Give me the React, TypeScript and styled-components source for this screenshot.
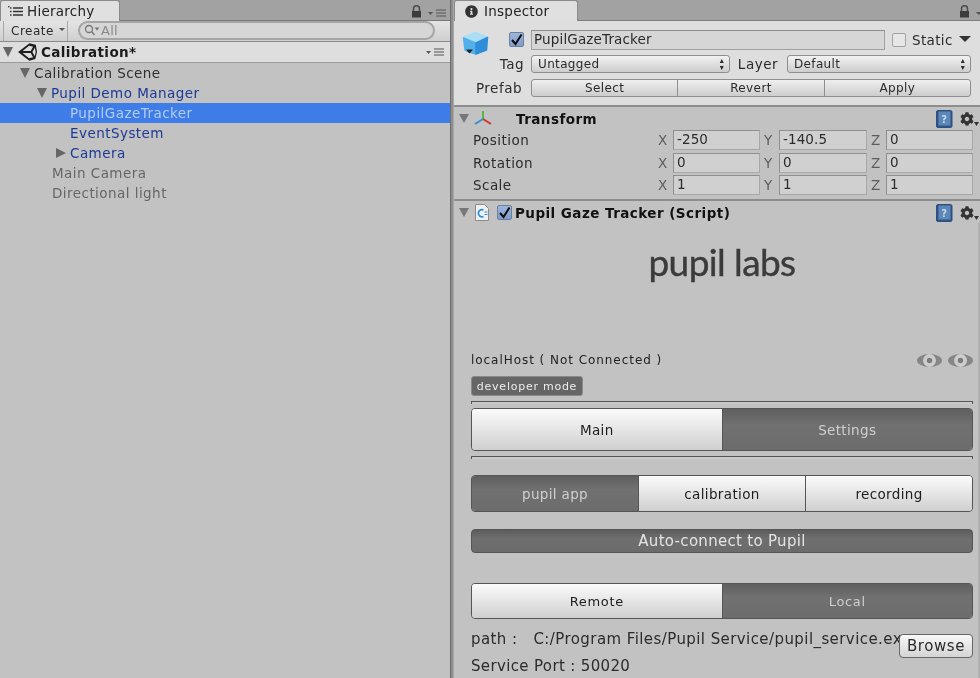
import React from "react";
import styled, { createGlobalStyle } from "styled-components";
import { FaCog, FaInfoCircle } from "react-icons/fa";

const Global = createGlobalStyle`
  html, body { margin: 0; padding: 0; background: #c2c2c2; overflow: hidden; }
  * { box-sizing: border-box; }
`;

const Editor = styled.div`
  width: 980px;
  height: 678px;
  display: flex;
  overflow: hidden;
  font-family: "DejaVu Sans", sans-serif;
  font-size: 13.5px;
  letter-spacing: 0.45px;
  color: #2b2b2b;
  background: #c2c2c2;
  filter: blur(0.45px);
`;

/* shared window chrome */
const Panel = styled.div<{ $w: number }>`
  width: ${(p) => p.$w}px;
  flex: none;
  display: flex;
  flex-direction: column;
`;
const Sash = styled.div`
  width: 4px;
  flex: none;
  background: #8e8e8e;
  border-left: 1px solid #6f6f6f;
  border-right: 1px solid #a8a8a8;
`;
const TabStrip = styled.div`
  height: 21px;
  flex: none;
  display: flex;
  justify-content: space-between;
  background: #a2a2a2;
  border-bottom: 1px solid #7b7b7b;
`;
const Tab = styled.div<{ $w: number; $pad: number; $gap: number }>`
  width: ${(p) => p.$w}px;
  height: 21px;
  flex: none;
  display: flex;
  align-items: center;
  gap: ${(p) => p.$gap}px;
  padding-left: ${(p) => p.$pad}px;
  font-size: 13.5px;
  letter-spacing: 0.25px;
  color: #222;
  background: #e0e0e0;
  border: 1px solid #8a8a8a;
  border-bottom: none;
  border-radius: 3px 3px 0 0;
`;
const TabTools = styled.div<{ $cut?: boolean }>`
  flex: none;
  display: flex;
  align-items: flex-end;
  gap: 6px;
  padding: 0 4px 2px 0;
  margin-right: ${(p) => (p.$cut ? -18 : 0)}px;
`;

/* hierarchy */
const Toolbar = styled.div`
  height: 21px;
  flex: none;
  display: flex;
  align-items: center;
  background: linear-gradient(#e4e4e4, #cfcfcf);
  border-bottom: 1px solid #8a8a8a;
`;
const CreateButton = styled.div`
  width: 65px;
  height: 20px;
  margin-left: 3px;
  display: flex;
  align-items: center;
  gap: 5px;
  padding-left: 7px;
  font-size: 12px;
  letter-spacing: 0.5px;
  border-left: 1px solid #a8a8a8;
  border-right: 1px solid #a8a8a8;
`;
const SmallArrow = styled.span`
  width: 0;
  height: 0;
  margin-bottom: 3px;
  border-left: 3px solid transparent;
  border-right: 3px solid transparent;
  border-top: 3px solid #555;
`;
const SearchField = styled.div`
  width: 357px;
  height: 19px;
  margin: -2px 0 0 10px;
  display: flex;
  align-items: center;
  padding-left: 4px;
  font-size: 13px;
  letter-spacing: 0.3px;
  color: #8a8a8a;
  background: #d6d6d6;
  border: 2px solid #a5a5a5;
  border-radius: 10px;
`;
const SceneHeader = styled.div`
  height: 21px;
  flex: none;
  display: flex;
  align-items: center;
  padding: 0 6px 0 3px;
  background: #dedede;
  border-bottom: 1px solid #9a9a9a;
  font-weight: bold;
  font-size: 13.5px;
  color: #1b1b1b;
  letter-spacing: 0.4px;
`;
const SceneTitle = styled.span`
  margin-left: 4px;
  flex: 1;
`;
const Row = styled.div<{ $depth: number; $kind?: "prefab" | "off" | "plain"; $selected?: boolean }>`
  height: 20px;
  flex: none;
  display: flex;
  align-items: center;
  padding-left: ${(p) => p.$depth}px;
  background: ${(p) => (p.$selected ? "#3e7ce8" : "transparent")};
  color: ${(p) =>
    p.$selected ? "#b4cdf6" : p.$kind === "prefab" ? "#1c3a96" : p.$kind === "off" ? "#666" : "#2f2f2f"};
`;
const Fold = styled.span<{ $open: boolean }>`
  width: 0;
  height: 0;
  flex: none;
  margin-right: 4px;
  ${(p) =>
    p.$open
      ? `border-left: 5.5px solid transparent; border-right: 5.5px solid transparent; border-top: 10px solid #666;`
      : `margin-left: 1px; border-top: 5.5px solid transparent; border-bottom: 5.5px solid transparent; border-left: 10px solid #666;`}
`;

/* inspector */
const ObjectHeader = styled.div`
  height: 86px;
  flex: none;
  display: grid;
  grid-template-rows: 26px 24px 24px;
  background: #dedede;
  border-bottom: 2px solid #8d8d8d;
  padding: 5px 8px 0 6px;
`;
const HeaderRow = styled.div`
  display: flex;
  align-items: center;
`;
const NameRow = styled(HeaderRow)`
  padding-top: 1px;
`;
const CubeSlot = styled.div`
  width: 49px;
  height: 26px;
  flex: none;
  align-self: flex-start;
  margin: 4px 0 -4px 2px;
`;
const Check = styled.span<{ $gap?: number }>`
  width: 15px;
  height: 15px;
  margin-left: ${(p) => p.$gap ?? -2}px;
  flex: none;
  display: inline-flex;
  align-items: center;
  justify-content: center;
  background: linear-gradient(#9cb6dc, #7f9dcc);
  border: 1px solid #6e7f9c;
  border-radius: 2px;
`;
const NameField = styled.div`
  width: 354px;
  height: 20px;
  margin-left: 7px;
  padding-left: 2px;
  line-height: 17px;
  font-size: 13.5px;
  letter-spacing: 0.15px;
  background: #d6d6d6;
  border: 1px solid #a0a0a0;
  border-top-color: #8a8a8a;
`;
const StaticBox = styled.span`
  width: 14px;
  height: 14px;
  margin-left: 7px;
  background: #e6e6e6;
  border: 1px solid #a2a2a2;
  border-radius: 2px;
`;
const StaticLabel = styled.span`
  margin-left: 6px;
  font-size: 13.5px;
  letter-spacing: 0.35px;
`;
const BigArrow = styled.span`
  width: 0;
  height: 0;
  margin-left: 6px;
  margin-bottom: 2px;
  border-left: 6px solid transparent;
  border-right: 6px solid transparent;
  border-top: 6px solid #333;
`;
const FieldLabel = styled.span<{ $w: number; $gap: number }>`
  width: ${(p) => p.$w}px;
  flex: none;
  text-align: right;
  font-size: 13.5px;
  letter-spacing: 0.5px;
  padding-right: ${(p) => p.$gap}px;
`;
const Popup = styled.div<{ $w: number }>`
  width: ${(p) => p.$w}px;
  height: 18px;
  flex: none;
  display: flex;
  align-items: center;
  justify-content: space-between;
  padding: 0 4px 0 6px;
  font-size: 12px;
  letter-spacing: 0.35px;
  background: linear-gradient(#f2f2f2, #cdcdcd);
  border: 1px solid #8f8f8f;
  border-radius: 3px;
`;
const Updown = styled.span`
  font-size: 8px;
  line-height: 7px;
  width: 6px;
  text-align: center;
  white-space: pre-line;
`;
const PrefabGroup = styled.div`
  display: flex;
  width: 440px;
  height: 18px;
  background: linear-gradient(#efefef, #cdcdcd);
  border: 1px solid #8f8f8f;
  border-radius: 3px;
`;
const PrefabButton = styled.div`
  flex: 1;
  display: flex;
  align-items: center;
  justify-content: center;
  font-size: 12px;
  letter-spacing: 0.4px;
  & + & { border-left: 1px solid #8f8f8f; }
`;
const ComponentBar = styled.div`
  height: 22px;
  flex: none;
  display: flex;
  align-items: center;
  padding: 1px 1px 0 5px;
  font-weight: bold;
  font-size: 13.5px;
  letter-spacing: 0.45px;
  color: #111;
`;
const FoldSmall = styled.span`
  width: 0;
  height: 0;
  flex: none;
  border-left: 5px solid transparent;
  border-right: 5px solid transparent;
  border-top: 9px solid #777;
  margin-right: 5px;
`;
const ComponentName = styled.span<{ $indent: number }>`
  margin-left: ${(p) => p.$indent}px;
  flex: 1;
`;
const TransformBody = styled.div`
  height: 72px;
  flex: none;
  display: grid;
  grid-auto-rows: 22.4px;
  padding-left: 19px;
  border-bottom: 2px solid #8d8d8d;
`;
const VectorRow = styled.div`
  display: flex;
  align-items: center;
`;
const VectorName = styled.span`
  width: 185px;
  flex: none;
`;
const Axis = styled.span`
  width: 15px;
  flex: none;
  text-align: left;
  letter-spacing: 0;
  color: #5d5d5d;
`;
const NumberField = styled.div<{ $w: number }>`
  width: ${(p) => p.$w}px;
  height: 20px;
  flex: none;
  margin-right: 4px;
  padding-left: 3px;
  line-height: 17px;
  letter-spacing: 0.1px;
  background: #d0d0d0;
  border: 1px solid #8f8f8f;
  border-bottom-color: #a8a8a8;
  border-right-color: #a8a8a8;
`;
const ScriptBody = styled.div`
  flex: 1;
  min-height: 0;
  display: flex;
  flex-direction: column;
  padding: 0 5px 0 17px;
  border-right: 2px solid #b2b2b2;
`;
const Logo = styled.div`
  height: 125px;
  flex: none;
  text-align: center;
  padding-top: 14px;
  font-family: Lato, "Open Sans", sans-serif;
  font-size: 37px;
  line-height: 50px;
  letter-spacing: -0.6px;
  color: #3b3b3b;
  -webkit-text-stroke: 0.4px #3b3b3b;
`;
const StatusRow = styled.div`
  height: 28px;
  flex: none;
  display: flex;
  align-items: center;
  justify-content: space-between;
  padding-bottom: 4px;
  font-size: 12px;
  letter-spacing: 0.95px;
  color: #222;
`;
const Eyes = styled.div`
  display: flex;
  gap: 6px;
`;
const DevBadge = styled.div`
  width: 112px;
  height: 20px;
  flex: none;
  display: flex;
  align-items: center;
  justify-content: center;
  font-size: 11px;
  letter-spacing: 0.75px;
  color: #ececec;
  background: #666;
  border: 1px solid #8a8a8a;
  border-radius: 3px;
`;
const Rule = styled.div<{ $top: number }>`
  height: 3px;
  flex: none;
  margin-top: ${(p) => p.$top}px;
  background: #c9c9c9;
  border-top: 1px solid #555;
  border-left: 1px solid #555;
  border-right: 1px solid #555;
`;
const Segments = styled.div<{ $h: number; $top: number }>`
  height: ${(p) => p.$h}px;
  flex: none;
  margin-top: ${(p) => p.$top}px;
  display: flex;
  border: 1px solid #555;
  border-radius: 4px;
  overflow: hidden;
`;
const Segment = styled.div<{ $on?: boolean; $small?: boolean }>`
  flex: 1;
  display: flex;
  align-items: center;
  justify-content: center;
  font-size: ${(p) => (p.$small ? 13 : 13.5)}px;
  letter-spacing: ${(p) => (p.$small ? 0.65 : 0.35)}px;
  color: ${(p) => (p.$on ? "#cfcfcf" : "#1d1d1d")};
  background: ${(p) =>
    p.$on ? "linear-gradient(#5f5f5f, #717171 40%, #6c6c6c)" : "linear-gradient(#fbfbfb, #cfcfcf)"};
  & + & { border-left: 1px solid #555; }
`;
const ConnectBar = styled.div`
  height: 24px;
  flex: none;
  margin-top: 17px;
  display: flex;
  align-items: center;
  justify-content: center;
  font-size: 15px;
  letter-spacing: 0.3px;
  color: #e4e4e4;
  background: linear-gradient(#5c5c5c, #6f6f6f 40%, #6b6b6b);
  border: 1px solid #555;
  border-radius: 4px;
`;
const PathRow = styled.div`
  height: 29px;
  flex: none;
  margin-top: 10px;
  display: flex;
  align-items: flex-start;
`;
const PathText = styled.div`
  flex: 1;
  min-width: 0;
  white-space: nowrap;
  font-size: 15px;
  line-height: 20px;
  letter-spacing: 0.42px;
`;
const PathValue = styled.span`
  margin-left: 16px;
`;
const Browse = styled.div`
  position: relative;
  z-index: 1;
  width: 74px;
  height: 24px;
  flex: none;
  margin-top: 5px;
  display: flex;
  align-items: center;
  justify-content: center;
  font-size: 15px;
  letter-spacing: 0.55px;
  background: linear-gradient(#f8f8f8, #d4d4d4);
  border: 1px solid #666;
  border-radius: 4px;
`;
const PortRow = styled.div`
  margin-top: -2px;
  font-size: 15px;
  line-height: 20px;
  letter-spacing: 0.35px;
`;
const GearWrap = styled.span`
  display: inline-flex;
  align-items: flex-end;
  margin-left: 7px;
`;

const LockIcon = () => (
  <svg width="11" height="13" viewBox="0 0 11 13">
    <path d="M2.500 6V3.800a3 3 0 0 1 6 0V6" fill="none" stroke="#4a4a4a" strokeWidth="1.500" />
    <rect x="1" y="6" width="9" height="6.500" fill="#3c3c3c" />
  </svg>
);
const MenuIcon = ({ color = "#555" }: { color?: string }) => (
  <svg width="18" height="9" viewBox="0 0 18 9">
    <path d="M0 3h5L2.500 6z" fill={color} />
    <path d="M8 1h10M8 4h10M8 7h10" stroke={color} strokeWidth="1.200" />
  </svg>
);
const ListIcon = () => (
  <svg width="15" height="11" viewBox="0 0 15 11">
    <path d="M5 2h10M5 5.500h10M5 9h10" stroke="#333" strokeWidth="1.300" />
    <path d="M0 .5h1.500M2 2h1.500M2 5.500h1.500M2 9h1.500" stroke="#333" strokeWidth="1.500" />
  </svg>
);
const SearchIcon = () => (
  <svg width="17" height="12" viewBox="0 0 17 12">
    <circle cx="5" cy="5" r="3.500" fill="none" stroke="#777" strokeWidth="1.300" />
    <path d="M7.500 7.500l3 3.500" stroke="#777" strokeWidth="1.500" />
    <path d="M10.500 3.500h5l-2.500 3z" fill="#777" />
  </svg>
);
const UnityIcon = () => (
  <svg width="20" height="20" viewBox="0 0 20 20">
    <path
      d="M12.500 1.200l6.300 1.600 1.200 7.200-1.700 7-6 1.800L1 10zM12 3.800L5.600 9h8.100l2.400-4.300zM5.600 11l6.400 5.300 4.100-1L13.700 11zM15.400 10l2.400 4.200.9-4.200-.9-4.200z"
      fill="#1e1e1e"
      fillRule="evenodd"
    />
  </svg>
);
const CubeIcon = () => (
  <svg width="27" height="25" viewBox="0 0 27 25">
    <g strokeLinejoin="round" strokeWidth="1.500">
      <path d="M1.500 6.500L13 1.500l12.500 4.500-12 5.500z" fill="#a9def5" stroke="#a9def5" />
      <path d="M1.500 7l12 5v11L7 21l-4-2z" fill="#55b0ea" stroke="#55b0ea" />
      <path d="M25.500 6.500l-11.500 5.500v11l10.500-4z" fill="#2f8ed8" stroke="#2f8ed8" />
    </g>
    <path d="M4 18.500h7l-3.500 4z" fill="#222" />
  </svg>
);
const Tick = () => (
  <svg width="13" height="13" viewBox="0 0 13 13">
    <path d="M2 7l3.500 4L11.500 1.500" fill="none" stroke="#0c0c0c" strokeWidth="2" />
  </svg>
);
const AxesIcon = () => (
  <svg width="18" height="18" viewBox="0 0 18 18">
    <path d="M9 9V1" stroke="#54b848" strokeWidth="2" />
    <path d="M9 9l8 5" stroke="#d8342c" strokeWidth="2" />
    <path d="M9 9l-8 5" stroke="#2f8fd6" strokeWidth="2" />
  </svg>
);
const ScriptIcon = () => (
  <svg width="16" height="17" viewBox="0 0 16 17">
    <path d="M1.500.5h9l4 4v12h-13z" fill="#eef1f3" stroke="#8c8c8c" />
    <path d="M9.500 6a3.600 3.600 0 1 0 0 6.500" fill="none" stroke="#2c8fd6" strokeWidth="1.700" />
    <path d="M10.500 8h3M10.500 10.500h3" stroke="#2c8fd6" />
  </svg>
);
const HelpIcon = () => (
  <svg width="17" height="18" viewBox="0 0 17 18">
    <rect x="0.500" y="0.500" width="15.500" height="17" rx="1.500" fill="#2f5486" stroke="#2c4f80" />
    <rect x="2.500" y="1.500" width="12" height="14" fill="#5c87b8" />
    <text x="8.500" y="13" fontSize="10" fontFamily="DejaVu Sans" fontWeight="bold" fill="#c6d8ec" textAnchor="middle">?</text>
  </svg>
);
const Gear = () => (
  <GearWrap>
    <FaCog size={14} color="#333" />
    <svg width="5" height="4" viewBox="0 0 5 4"><path d="M0 0h5L2.500 4z" fill="#333" /></svg>
  </GearWrap>
);
const EyeIcon = () => (
  <svg width="25" height="15" viewBox="0 0 25 15">
    <ellipse cx="12.500" cy="7.500" rx="12.500" ry="6.500" fill="#868686" />
    <circle cx="12.500" cy="7.500" r="6.500" fill="#cdcdcd" />
    <circle cx="12.500" cy="7.500" r="2.700" fill="#7b7b7b" />
  </svg>
);

const vectors = [
  { name: "Position", x: "-250", y: "-140.5", z: "0" },
  { name: "Rotation", x: "0", y: "0", z: "0" },
  { name: "Scale", x: "1", y: "1", z: "1" },
];

const App = () => {
  return (
    <Editor>
      <Global />
      <Panel $w={450}>
        <TabStrip>
          <Tab $w={120} $pad={7} $gap={4}>
            <ListIcon />
            Hierarchy
          </Tab>
          <TabTools>
            <LockIcon />
            <MenuIcon />
          </TabTools>
        </TabStrip>
        <Toolbar>
          <CreateButton>
            Create
            <SmallArrow />
          </CreateButton>
          <SearchField>
            <SearchIcon />
            All
          </SearchField>
        </Toolbar>
        <SceneHeader>
          <Fold $open />
          <UnityIcon />
          <SceneTitle>Calibration*</SceneTitle>
          <MenuIcon />
        </SceneHeader>
        <Row $depth={20}>
          <Fold $open />
          Calibration Scene
        </Row>
        <Row $depth={37} $kind="prefab">
          <Fold $open />
          Pupil Demo Manager
        </Row>
        <Row $depth={70} $selected>PupilGazeTracker</Row>
        <Row $depth={70} $kind="prefab">EventSystem</Row>
        <Row $depth={55} $kind="prefab">
          <Fold $open={false} />
          Camera
        </Row>
        <Row $depth={52} $kind="off">Main Camera</Row>
        <Row $depth={52} $kind="off">Directional light</Row>
      </Panel>
      <Sash />
      <Panel $w={526}>
        <TabStrip>
          <Tab $w={124} $pad={10} $gap={6}>
            <FaInfoCircle size={13} color="#333" />
            Inspector
          </Tab>
          <TabTools $cut>
            <LockIcon />
            <MenuIcon />
          </TabTools>
        </TabStrip>
        <ObjectHeader>
          <NameRow>
            <CubeSlot>
              <CubeIcon />
            </CubeSlot>
            <Check>
              <Tick />
            </Check>
            <NameField>PupilGazeTracker</NameField>
            <StaticBox />
            <StaticLabel>Static</StaticLabel>
            <BigArrow />
          </NameRow>
          <HeaderRow>
            <FieldLabel $w={71} $gap={7}>Tag</FieldLabel>
            <Popup $w={199}>
              Untagged
              <Updown>{"▴\n▾"}</Updown>
            </Popup>
            <FieldLabel $w={57} $gap={9}>Layer</FieldLabel>
            <Popup $w={184}>
              Default
              <Updown>{"▴\n▾"}</Updown>
            </Popup>
          </HeaderRow>
          <HeaderRow>
            <FieldLabel $w={71} $gap={9}>Prefab</FieldLabel>
            <PrefabGroup>
              <PrefabButton>Select</PrefabButton>
              <PrefabButton>Revert</PrefabButton>
              <PrefabButton>Apply</PrefabButton>
            </PrefabGroup>
          </HeaderRow>
        </ObjectHeader>
        <ComponentBar>
          <FoldSmall />
          <AxesIcon />
          <ComponentName $indent={24}>Transform</ComponentName>
          <HelpIcon />
          <Gear />
        </ComponentBar>
        <TransformBody>
          {vectors.map((v) => (
            <VectorRow key={v.name}>
              <VectorName>{v.name}</VectorName>
              <Axis>X</Axis>
              <NumberField $w={87}>{v.x}</NumberField>
              <Axis>Y</Axis>
              <NumberField $w={88}>{v.y}</NumberField>
              <Axis>Z</Axis>
              <NumberField $w={87}>{v.z}</NumberField>
            </VectorRow>
          ))}
        </TransformBody>
        <ComponentBar>
          <FoldSmall />
          <ScriptIcon />
          <Check $gap={7}>
            <Tick />
          </Check>
          <ComponentName $indent={3}>Pupil Gaze Tracker (Script)</ComponentName>
          <HelpIcon />
          <Gear />
        </ComponentBar>
        <ScriptBody>
          <Logo>pupil labs</Logo>
          <StatusRow>
            localHost ( Not Connected )
            <Eyes>
              <EyeIcon />
              <EyeIcon />
            </Eyes>
          </StatusRow>
          <DevBadge>developer mode</DevBadge>
          <Rule $top={5} />
          <Segments $h={43} $top={4}>
            <Segment>Main</Segment>
            <Segment $on>Settings</Segment>
          </Segments>
          <Rule $top={5} />
          <Segments $h={37} $top={16}>
            <Segment $on>pupil app</Segment>
            <Segment>calibration</Segment>
            <Segment>recording</Segment>
          </Segments>
          <ConnectBar>Auto-connect to Pupil</ConnectBar>
          <Segments $h={36} $top={30}>
            <Segment $small>Remote</Segment>
            <Segment $on $small>Local</Segment>
          </Segments>
          <PathRow>
            <PathText>
              path :<PathValue>C:/Program Files/Pupil Service/pupil_service.exe</PathValue>
            </PathText>
            <Browse>Browse</Browse>
          </PathRow>
          <PortRow>Service Port : 50020</PortRow>
        </ScriptBody>
      </Panel>
    </Editor>
  );
};

export default App;
